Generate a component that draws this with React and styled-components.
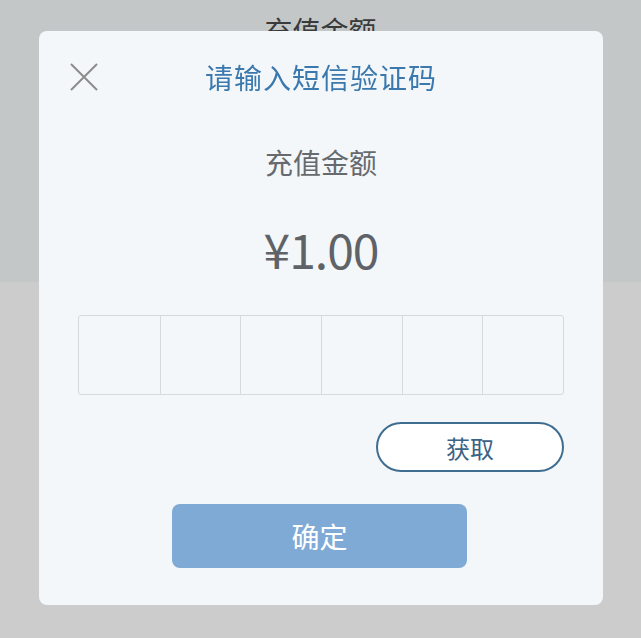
import React, { useState } from "react";
import styled, { createGlobalStyle } from "styled-components";

const GlobalStyle = createGlobalStyle`
    html, body {
        margin: 0;
        padding: 0;
        background: #cccccc;
        font-family: "Noto Sans CJK SC", "Noto Sans", sans-serif;
    }
`;

export default function App() {
    const [code] = useState(["", "", "", "", "", ""]);
    return (
        <>
            <GlobalStyle />
            <Page>
                <Header>
                    <HeaderLabel>充值金额</HeaderLabel>
                </Header>
                <Body />
            </Page>
            <Modal>
                <TitleRow>
                    <Close aria-label="关闭">
                        <svg width="28" height="28" viewBox="0 0 28 28">
                            <path
                                d="M1 1 L27 27 M27 1 L1 27"
                                stroke="#8c8c8c"
                                strokeWidth="2"
                                fill="none"
                            />
                        </svg>
                    </Close>
                    <Title>请输入短信验证码</Title>
                </TitleRow>
                <Label>充值金额</Label>
                <Amount>¥1.00</Amount>
                <CodeRow>
                    {code.map((c, i) => (
                        <Cell key={i}>{c}</Cell>
                    ))}
                </CodeRow>
                <FetchRow>
                    <FetchButton>获取</FetchButton>
                </FetchRow>
                <Confirm>确定</Confirm>
            </Modal>
        </>
    );
}

const Page = styled.div`
    width: 641px;
    height: 638px;
    display: flex;
    flex-direction: column;
`;
const Header = styled.div`
    height: 282px;
    background: #c4c7c8;
    display: flex;
    justify-content: center;
`;
const HeaderLabel = styled.div`
    margin-top: 10px;
    font-size: 28px;
    line-height: 40px;
    color: #3a3a3a;
`;
const Body = styled.div`
    flex: 1;
    background: #cccccc;
`;
const Modal = styled.div`
    position: fixed;
    top: 31px;
    left: 39px;
    width: 564px;
    box-sizing: border-box;
    padding: 0 39px 37px;
    background: #f3f7fa;
    border-radius: 8px;
    display: flex;
    flex-direction: column;
    align-items: center;
`;
const TitleRow = styled.div`
    position: relative;
    width: 100%;
    height: 92px;
    display: flex;
    align-items: center;
    justify-content: center;
`;
const Close = styled.button`
    position: absolute;
    left: -8px;
    top: 32px;
    padding: 0;
    border: none;
    background: none;
    display: flex;
`;
const Title = styled.div`
    font-size: 28px;
    color: #3a78ad;
    letter-spacing: 1px;
`;
const Label = styled.div`
    margin-top: 19px;
    font-size: 28px;
    line-height: 40px;
    color: #666a6e;
`;
const Amount = styled.div`
    margin-top: 36px;
    font-size: 48px;
    line-height: 60px;
    color: #5f6367;
    letter-spacing: -1px;
`;
const CodeRow = styled.div`
    margin-top: 37px;
    width: 100%;
    height: 80px;
    display: grid;
    grid-template-columns: repeat(6, 1fr);
    border: 1px solid #d6dadd;
    border-radius: 3px;
    box-sizing: border-box;
`;
const Cell = styled.div`
    border-left: 1px solid #d6dadd;
    &:first-child {
        border-left: none;
    }
`;
const FetchRow = styled.div`
    margin-top: 27px;
    width: 100%;
    display: flex;
    justify-content: flex-end;
`;
const FetchButton = styled.button`
    width: 188px;
    height: 50px;
    border: 2px solid #3f6d90;
    border-radius: 25px;
    background: #ffffff;
    color: #3b6386;
    font-family: inherit;
    font-size: 24px;
    padding: 0;
`;
const Confirm = styled.button`
    margin-top: 32px;
    margin-right: 3px;
    width: 295px;
    height: 64px;
    border: none;
    border-radius: 8px;
    background: #7faad6;
    color: #ffffff;
    font-family: inherit;
    font-size: 28px;
`;
